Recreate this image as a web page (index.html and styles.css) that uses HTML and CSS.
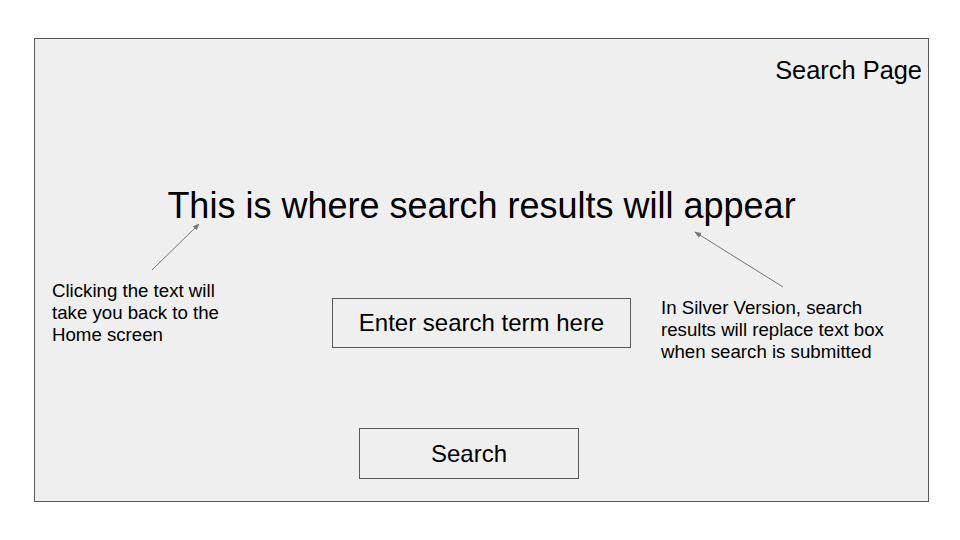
FILE: index.html
```html
<!DOCTYPE html>
<html>
<head>
<meta charset="utf-8">
<link rel="stylesheet" href="styles.css">
</head>
<body>
<div class="frame">
  <div class="header">Search Page</div>
  <h1 class="title">This is where search results will appear</h1>
  <div class="field-row"><div class="field">Enter search term here</div></div>
  <div class="button-row"><div class="button">Search</div></div>

  <div class="note note-left">Clicking the text will<br>take you back to the<br>Home screen</div>
  <div class="note note-right">In Silver Version, search<br>results will replace text box<br>when search is submitted</div>

  <svg class="arrows" width="895" height="464" viewBox="0 0 895 464">
    <defs>
      <marker id="ah" viewBox="0 0 10 10" refX="9" refY="5" markerWidth="7" markerHeight="7" orient="auto-start-reverse" markerUnits="userSpaceOnUse">
        <path d="M0,1 L10,5 L0,9 z" fill="#757575"/>
      </marker>
    </defs>
    <line x1="118" y1="232" x2="165" y2="186" stroke="#757575" stroke-width="1" marker-end="url(#ah)"/>
    <line x1="749" y1="249" x2="661" y2="194" stroke="#757575" stroke-width="1" marker-end="url(#ah)"/>
  </svg>
</div>
</body>
</html>
```

FILE: styles.css
```css
html, body {
  margin: 0;
  padding: 0;
  background: #ffffff;
}
body {
  width: 960px;
  height: 540px;
  overflow: hidden;
  font-family: "Liberation Sans", Arial, sans-serif;
  color: #000;
}
.frame {
  position: relative;
  box-sizing: border-box;
  margin: 38px 0 0 34px;
  width: 895px;
  height: 464px;
  border: 1px solid #595959;
  background: #efefef;
  display: flex;
  flex-direction: column;
}
.header {
  align-self: flex-end;
  margin: 17px 6px 0 0;
  font-size: 25.4px;
  line-height: 28px;
}
.title {
  margin: 101px 0 0 0;
  font-weight: normal;
  font-size: 36px;
  line-height: 42px;
  text-align: center;
}
.field-row {
  display: flex;
  justify-content: center;
  margin-top: 71px;
}
.field {
  box-sizing: border-box;
  width: 299px;
  height: 50px;
  border: 1px solid #595959;
  font-size: 24px;
  display: flex;
  align-items: center;
  justify-content: center;
}
.button-row {
  display: flex;
  justify-content: center;
  margin-top: 80px;
  padding-right: 25px;
}
.button {
  box-sizing: border-box;
  width: 220px;
  height: 51px;
  border: 1px solid #595959;
  font-size: 24px;
  display: flex;
  align-items: center;
  justify-content: center;
}
.note {
  position: absolute;
  font-size: 18.67px;
  line-height: 22px;
}
.note-left {
  left: 17px;
  top: 241px;
}
.note-right {
  left: 626px;
  top: 258px;
}
.arrows {
  position: absolute;
  left: -1px;
  top: -1px;
  pointer-events: none;
}
```
